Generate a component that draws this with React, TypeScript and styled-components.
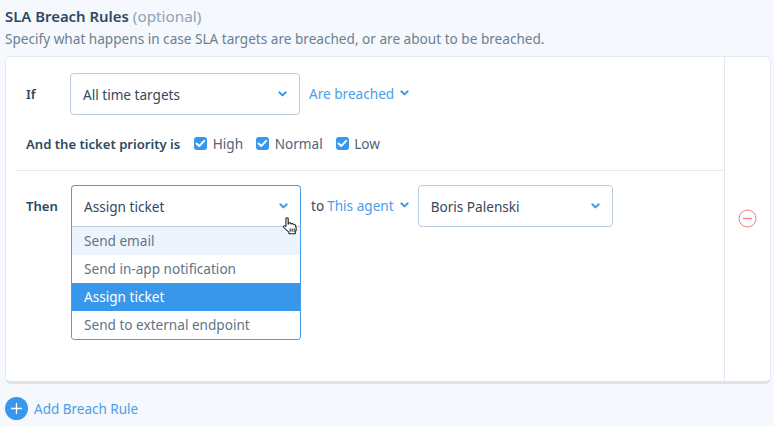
import React from "react";
import styled, { createGlobalStyle } from "styled-components";

const Global = createGlobalStyle`
  html, body { margin: 0; padding: 0; background: #f5f8fc; }
  body { font-family: "Noto Sans", "Open Sans", sans-serif; color: #34495e; }
  * { box-sizing: border-box; }
`;

const Page = styled.div`
  width: 774px;
  height: 426px;
  overflow: hidden;
  padding: 6px 3px 0 5px;
  display: flex;
  flex-direction: column;
`;
const Heading = styled.h2`
  margin: 0;
  font-size: 14.9px;
  line-height: 20px;
  font-weight: 600;
  color: #2c4a63;
  display: flex;
  gap: 4px;
`;
const Optional = styled.span`
  font-weight: 400;
  font-size: 15.3px;
  color: #8fa3b5;
`;
const Hint = styled.p`
  margin: 3px 0 0;
  font-size: 13.6px;
  line-height: 20px;
  color: #6b8092;
`;
const Card = styled.div`
  margin-top: 7px;
  height: 328px;
  flex: none;
  display: flex;
  background: #fff;
  border: 1px solid #e3e9f1;
  border-bottom: 3px solid #dfe4ea;
  border-radius: 6px;
`;
const Main = styled.div`
  flex: 1;
  min-width: 0;
  display: flex;
  flex-direction: column;
`;
const Side = styled.div`
  width: 46px;
  flex: none;
  border-left: 1px solid #e3e9f1;
  display: flex;
  justify-content: center;
  padding-top: 152px;
`;
const Section = styled.div`
  margin-left: 10px;
  padding: 16px 0 0 10px;
  height: 114px;
  border-bottom: 1px solid #e3e9f1;
`;
const Row = styled.div`
  display: flex;
  align-items: center;
`;
const Label = styled.span<{ $w?: number; $mr?: number }>`
  font-size: 13.1px;
  font-weight: 600;
  color: #2c4a63;
  width: ${(p) => (p.$w ? `${p.$w}px` : "auto")};
  margin-right: ${(p) => p.$mr ?? 0}px;
  flex: none;
`;
const Select = styled.div<{ $w: number; $open?: boolean; $ml?: number }>`
  position: relative;
  width: ${(p) => p.$w}px;
  height: 42px;
  flex: none;
  margin-left: ${(p) => p.$ml ?? 0}px;
  display: flex;
  align-items: center;
  justify-content: space-between;
  padding: 0 12px 0 12px;
  background: #fff;
  font-size: 13.6px;
  color: #34495e;
  border: 1px solid ${(p) => (p.$open ? "#4a9eea" : "#bccada")};
  border-bottom-color: #bccada;
  border-radius: ${(p) => (p.$open ? "4px 4px 0 0" : "4px")};
`;
const Menu = styled.ul`
  position: absolute;
  left: -1px;
  right: -1px;
  top: 40px;
  margin: 0;
  padding: 0;
  list-style: none;
  background: #fff;
  border: 1px solid #4a9eea;
  border-top: 1px solid #bccada;
  border-radius: 0 0 4px 4px;
  overflow: hidden;
  z-index: 2;
`;
const Option = styled.li<{ $state?: "hover" | "active" }>`
  height: 28px;
  line-height: 28px;
  padding: 0 12px;
  font-size: 13.6px;
  color: ${(p) => (p.$state === "active" ? "#fff" : "#5f7486")};
  background: ${(p) =>
    p.$state === "active" ? "#3897ea" : p.$state === "hover" ? "#eef4fe" : "#fff"};
`;
const Link = styled.span<{ $ml?: number }>`
  display: inline-flex;
  align-items: center;
  gap: 6px;
  margin-left: ${(p) => p.$ml ?? 0}px;
  padding-bottom: 2px;
  font-size: 13.6px;
  color: #4a9eea;
`;
const Priority = styled(Row)`
  margin-top: 19px;
`;
const Check = styled.label`
  display: inline-flex;
  align-items: center;
  gap: 5.5px;
  margin-right: 13px;
  padding-bottom: 1px;
  font-size: 13.6px;
  color: #4f6577;
`;
const Box = styled.span`
  width: 13px;
  height: 13px;
  border-radius: 3px;
  background: #3897ea;
  display: inline-flex;
  align-items: center;
  justify-content: center;
`;
const ThenSection = styled.div`
  padding: 14px 0 0 20px;
`;
const To = styled.span`
  font-size: 13.6px;
  color: #34495e;
  padding-bottom: 2px;
  margin: 0 3px 0 10px;
`;
const Footer = styled.div`
  margin-top: 13px;
  display: flex;
  align-items: center;
  gap: 6px;
  font-size: 13.5px;
  color: #4a9eea;
`;
const Cursor = styled.svg`
  position: absolute;
  right: 0;
  top: 31px;
  z-index: 3;
`;

const Chevron = () => (
  <svg width="9" height="6" viewBox="0 0 9 6" fill="none">
    <path d="M1.3 1.3 4.5 4.4 7.7 1.3" stroke="#3897ea" strokeWidth="1.9" strokeLinecap="round" strokeLinejoin="round" />
  </svg>
);

const Tick = () => (
  <svg width="11" height="9" viewBox="0 0 11 9" fill="none">
    <path d="M1.5 4.5 4.2 7 9.2 1.8" stroke="#fff" strokeWidth="1.9" strokeLinecap="round" strokeLinejoin="round" />
  </svg>
);

const PriorityItem = ({ label }: { label: string }) => (
  <Check>
    <Box><Tick /></Box>
    {label}
  </Check>
);

export default function App() {
  return (
    <Page>
      <Global />
      <Heading>SLA Breach Rules <Optional>(optional)</Optional></Heading>
      <Hint>Specify what happens in case SLA targets are breached, or are about to be breached.</Hint>
      <Card>
        <Main>
          <Section>
            <Row>
              <Label $w={44}>If</Label>
              <Select $w={230}>
                All time targets
                <Chevron />
              </Select>
              <Link $ml={9}>Are breached <Chevron /></Link>
            </Row>
            <Priority>
              <Label $mr={14}>And the ticket priority is</Label>
              <PriorityItem label="High" />
              <PriorityItem label="Normal" />
              <PriorityItem label="Low" />
            </Priority>
          </Section>
          <ThenSection>
            <Row>
              <Label $w={45}>Then</Label>
              <Select $w={230} $open>
                Assign ticket
                <Chevron />
                <Menu>
                  <Option $state="hover">Send email</Option>
                  <Option>Send in-app notification</Option>
                  <Option $state="active">Assign ticket</Option>
                  <Option>Send to external endpoint</Option>
                </Menu>
                <Cursor width="18" height="19" viewBox="0 0 16 20" preserveAspectRatio="none">
                  <path d="M3.5 1.6c0-1 2-1 2 0v6l.4-1c.4-.8 1.8-.6 1.9.3l.2.5c.3-.8 1.7-.7 1.9.2l.2.5c.4-.6 1.7-.4 1.9.5l.6 3.5c.2 1.4-.2 2.7-.8 3.6v2H6.2v-1.6L1.6 11c-.7-1 .4-2.2 1.5-1.5l.4.3z" fill="#fff" stroke="#222" strokeWidth="1" strokeLinejoin="round" />
                  <path d="M7.2 12v3.5M9 12v3.5M10.8 12v3.5" stroke="#222" strokeWidth="0.9" />
                </Cursor>
              </Select>
              <To>to</To>
              <Link>This agent <Chevron /></Link>
              <Select $w={195} $ml={9}>
                Boris Palenski
                <Chevron />
              </Select>
            </Row>
          </ThenSection>
        </Main>
        <Side>
          <svg width="19" height="19" viewBox="0 0 19 19" fill="none">
            <circle cx="9.5" cy="9.5" r="8.5" stroke="#f27a7a" strokeWidth="1" />
            <path d="M5 9.5h9" stroke="#f27a7a" strokeWidth="1.2" />
          </svg>
        </Side>
      </Card>
      <Footer>
        <svg width="23" height="23" viewBox="0 0 23 23">
          <circle cx="11.5" cy="11.5" r="11.5" fill="#3897ea" />
          <path d="M11.5 6v11M6 11.5h11" stroke="#fff" strokeWidth="1.3" />
        </svg>
        Add Breach Rule
      </Footer>
    </Page>
  );
}
